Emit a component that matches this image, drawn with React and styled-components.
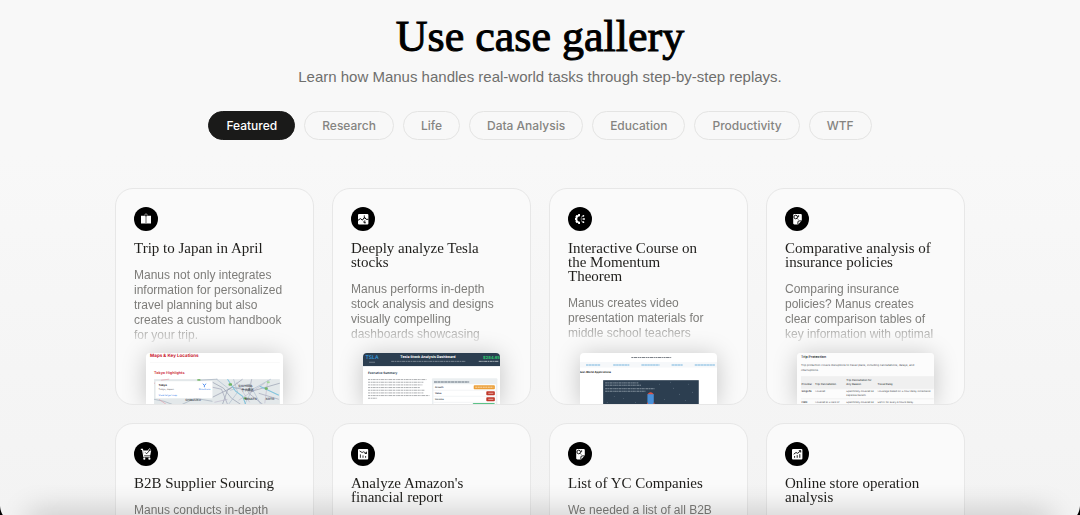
import React, { useState } from "react";
import styled, { createGlobalStyle, css } from "styled-components";

const GlobalStyle = createGlobalStyle`
  * {
    box-sizing: border-box;
  }
  body {
    margin: 0;
    background: #f8f8f8;
    font-family: "Liberation Sans", Arial, sans-serif;
    -webkit-font-smoothing: antialiased;
  }
`;

const Page = styled.div`
  position: relative;
  height: 100vh;
  overflow: hidden;
  background: linear-gradient(180deg, #f8f8f8 30%, #f3f3f3 100%);
`;

const Container = styled.main`
  display: flex;
  flex-direction: column;
  align-items: center;
  max-width: 886px;
  margin: 0 auto;
  padding: 12px 18px 48px;
`;

const Title = styled.h1`
  margin: 0;
  font-family: "Liberation Serif", serif;
  font-size: 44px;
  line-height: 50px;
  font-weight: 400;
  color: #000;
  -webkit-text-stroke: 1px #000;
`;

const Subtitle = styled.p`
  margin: 4px 0 0;
  font-size: 15px;
  line-height: 22px;
  color: #6f6f6d;
`;

const Tabs = styled.div`
  display: flex;
  justify-content: center;
  gap: 9px;
  margin: 23px 0 48px;
`;

const Tab = styled.button`
  height: 29px;
  padding: 0 17px;
  border: 1px solid #e4e4e3;
  border-radius: 15px;
  background: transparent;
  color: #858481;
  font-family: Inter, "Liberation Sans", sans-serif;
  font-size: 12px;
  font-weight: 500;
  white-space: nowrap;
  cursor: pointer;

  ${({ $active }) =>
    $active &&
    css`
      background: #1a1a19;
      border-color: #1a1a19;
      color: #fff;
    `}
`;

const Grid = styled.div`
  display: grid;
  grid-template-columns: repeat(4, 1fr);
  grid-auto-rows: 217px;
  gap: 18px;
  width: 100%;
`;

const Card = styled.article`
  display: flex;
  flex-direction: column;
  border: 1px solid #e7e7e7;
  border-radius: 18px;
  background: #fafafa;
  overflow: hidden;
`;

const CardBody = styled.div`
  flex: 1;
  min-height: 0;
  overflow: hidden;
  padding: 18px 24px 0 18px;
  mask-image: linear-gradient(180deg, #000 132px, transparent 158px);
`;

const IconCircle = styled.div`
  width: 24px;
  height: 24px;
  border-radius: 50%;
  background: #000;

  svg {
    display: block;
  }
`;

const CardTitle = styled.h2`
  margin: 10px 0 13px;
  padding-right: 8px;
  font-family: "Liberation Serif", serif;
  font-size: 15px;
  line-height: 14px;
  font-weight: 400;
  color: #1f1e1b;
`;

const CardText = styled.p`
  margin: 0;
  font-size: 12px;
  line-height: 15px;
  color: #7d7c79;
`;

const Preview = styled.div`
  flex: none;
  width: 70%;
  height: 51px;
  margin: 0 auto;
  border-radius: 4px 4px 0 0;
  background: #fff;
  box-shadow: 0 2px 24px rgba(0, 0, 0, 0.22);
  overflow: hidden;

  svg {
    display: block;
    width: 100%;
    height: 51px;
    text-rendering: geometricPrecision;
  }
`;

const BottomShade = styled.div`
  position: absolute;
  left: 0;
  right: 0;
  bottom: 0;
  height: 30px;
  overflow: hidden;
  pointer-events: none;

  &::after {
    content: "";
    position: absolute;
    left: 32px;
    right: 32px;
    top: 100%;
    height: 20px;
    box-shadow: 0 0 30px 3px rgba(0, 0, 0, 0.2);
  }
`;

const Corner = styled.svg`
  position: absolute;
  bottom: 0;
  ${({ $side }) => ($side === "left" ? "left: 0;" : "right: 0; transform: scaleX(-1);")}
`;

const Glyph = ({ children }) => (
  <svg width="24" height="24" viewBox="0 0 24 24" fill="none" aria-hidden="true">
    {children}
  </svg>
);

const BookIcon = () => (
  <Glyph>
    <path d="M7 8.8h3.2c.8 0 1.3.2 1.5.6V17c-.3-.4-.8-.5-1.5-.5H7z" fill="#fff" />
    <path d="M17 8.8h-3.2c-.8 0-1.3.2-1.5.6V17c.3-.4.8-.5 1.5-.5H17z" fill="#fff" />
    <circle cx="12" cy="8.2" r="1.3" fill="#000" stroke="#bbb" strokeWidth=".7" />
  </Glyph>
);

const StockIcon = () => (
  <Glyph>
    <rect x="7" y="7" width="10.4" height="10.4" rx="1" fill="#fff" />
    <path d="M7 13.3l2.4-1.7 2 1.5 2.2-2.8 1.5 2h2.3" stroke="#000" strokeWidth="1" />
    <path d="M13.3 8.3v3.4M13.8 13.3v3.2M12 14.8l2.8 1" stroke="#000" strokeWidth=".8" />
  </Glyph>
);

const CourseIcon = () => (
  <Glyph>
    <path
      d="M12 7v2.300a2.700 2.700 0 0 0 0 5.400V17h-1.700l-.4-1.300-1.500.4-1-1.500.6-1-1-.6v-2l1-.6-.6-1 1-1.500 1.500.4.4-1.300z"
      fill="#fff"
    />
    <path d="M12.6 12h3M13 10.4l2-1.400M13 13.600l2 1.400" stroke="#fff" strokeWidth=".6" />
    <circle cx="15.4" cy="8.8" r=".9" fill="#fff" />
    <circle cx="16" cy="12" r=".9" fill="#fff" />
    <circle cx="15.4" cy="15.2" r=".9" fill="#fff" />
  </Glyph>
);

const DocumentIcon = () => (
  <Glyph>
    <path d="M9.4 7h6.2c.7 0 1.2.5 1.2 1.2v5.2l-3.7 4H9.4c-.7 0-1.2-.5-1.2-1.2v-8c0-.7.5-1.2 1.2-1.2z" fill="#fff" />
    <circle cx="10.7" cy="10" r="1.8" fill="#fff" stroke="#000" strokeWidth=".9" />
    <path d="M12 11.3l1.2 1.2M13.6 8.2v2" stroke="#000" strokeWidth=".8" />
    <path d="M12.9 17.4v-2.3c0-.8.4-1.2 1.2-1.2h2.7" stroke="#000" strokeWidth=".9" />
  </Glyph>
);

const CartIcon = () => (
  <Glyph>
    <path d="M6.8 7.4h1.7l1.3 7.4h6.3" stroke="#fff" strokeWidth="1.1" />
    <path d="M9 8.6h8.2l-1 5H9.9z" fill="#fff" />
    <path d="M11.2 10.4l1.4 1.4 3.4-3.8" stroke="#000" strokeWidth=".8" />
    <path d="M14 8.6l1.4-1.9 1.1.7" stroke="#fff" strokeWidth=".8" />
    <circle cx="10.3" cy="16.7" r="1.1" fill="#fff" />
    <circle cx="15.4" cy="16.7" r="1.1" fill="#fff" />
  </Glyph>
);

const ReportIcon = () => (
  <Glyph>
    <rect x="7" y="7" width="10.2" height="10.4" rx="1" fill="#fff" />
    <path d="M8.6 9l2.5 1.5 1.6-.7 2.8 1.7M15.5 9.7v1.8h-1.8" stroke="#000" strokeWidth=".8" />
    <path d="M9.4 12.4v3.4M12 13.4v2.4M14.6 14v1.8" stroke="#000" strokeWidth=".8" />
  </Glyph>
);

const StoreIcon = () => (
  <Glyph>
    <rect x="7" y="7" width="10.4" height="10.4" rx="1" fill="#fff" />
    <path d="M8.7 12.2l2.3-1.7 1.7.8 2.9-2.5M13.8 8.7h1.9v1.8" stroke="#000" strokeWidth=".9" />
    <path d="M9.6 14v1.8M12.2 13.2v2.6M14.8 12.2v3.6" stroke="#000" strokeWidth=".9" />
  </Glyph>
);

const Thumb = ({ children, label }) => (
  <svg
    viewBox="0 0 137 51"
    preserveAspectRatio="xMidYMin slice"
    fontFamily="Inter, 'Liberation Sans', sans-serif"
    role="img"
    aria-label={label}
  >
    {children}
  </svg>
);

const MapThumb = () => (
  <Thumb label="Maps & Key Locations">
    <text x="4" y="4.2" fontSize="4.5" fontWeight="700" fill="#c8202f">Maps &amp; Key Locations</text>
    <path d="M4 9.5h129" stroke="#f3f3f3" strokeWidth=".5" />
    <text x="8" y="21" fontSize="3.7" fontWeight="700" fill="#d03a48">Tokyo Highlights</text>
    <rect x="8" y="26" width="125" height="25" fill="#e3e8ea" />
    <g fill="none" strokeWidth=".6">
      <path d="M66 29l11 6 8 10 9 6M76 51l5-14 15-11M66 44l20-10 19 4 28-8" stroke="#8d94a8" />
      <path d="M70 26l14 11 19-6 11 20M87 26l4 13-9 12M98 51l8-15 18-10" stroke="#a6b7c9" />
      <path d="M66 34l9 2 6 15M105 26l-3 14 14 11M112 40l20 6" stroke="#9a9db2" />
      <path d="M81 26l8 12 7 5 3 8M113 33l19 9" stroke="#7fc3dc" strokeWidth="1" />
      <path d="M8 46l10 2 8 3M36 51l13-6 17 3M53 27l18-1" stroke="#9aa6b5" />
      <path d="M8 30h1M15 27l8-1M20 51l-7-5" stroke="#e49aa5" />
      <path d="M90 29l13 20M92 47l26-17M68 49l13-3M121 27l-3 23" stroke="#b5adc4" strokeWidth=".5" />
    </g>
    <g fill="#71b562">
      <rect x="82" y="30" width="3.5" height="2.5" rx="1" />
      <rect x="118" y="34" width="3" height="2.5" rx="1" />
      <rect x="51" y="26" width="3" height="1.5" />
      <rect x="97" y="44" width="3" height="2" rx="1" />
      <rect x="120" y="28" width="3" height="2" rx="1" fill="#a3d79a" />
    </g>
    <g fontSize="3" fontWeight="600" fill="#3d434d">
      <text x="92" y="34">CHIYODA</text>
      <text x="95" y="37.4">千代田区</text>
      <text x="39" y="48">SHINJUKU</text>
      <text x="98" y="47">MINATO</text>
      <text x="119" y="47">KOTO</text>
    </g>
    <rect x="9.5" y="28" width="56.5" height="17" fill="#fff" />
    <text x="12.5" y="32.4" fontSize="2.8" fontWeight="700" fill="#222">Tokyo</text>
    <text x="12.5" y="36.6" fontSize="2.4" fill="#555">Tokyo, Japan</text>
    <text x="12.5" y="43" fontSize="2.4" fill="#1a73e8">View larger map</text>
    <path d="M56.5 30.5l1.5 1.7 1.8-1.7M58 32.2v1.8" stroke="#3f83ec" strokeWidth=".9" fill="none" />
    <text x="52.5" y="37" fontSize="2.4" fill="#1a73e8">Directions</text>
  </Thumb>
);

const paragraph = [58, 55, 54, 52, 56, 55, 61, 9];

const StockThumb = () => (
  <Thumb label="Tesla Stock Analysis Dashboard">
    <rect width="137" height="13" fill="#2c3e50" />
    <text x="2.5" y="6" fontSize="5" fontWeight="600" fill="#3498db">TSLA</text>
    <path d="M6 9.2h6" stroke="#98a3ad" strokeWidth=".6" />
    <text x="64.5" y="5.4" fontSize="3.5" fontWeight="700" fill="#fff" textAnchor="middle">
      Tesla Stock Analysis Dashboard
    </text>
    <path d="M28 8.3h74" stroke="#98a3ad" strokeWidth=".7" strokeDasharray="3 .5 1.4 .5" />
    <text x="136" y="5.8" fontSize="4" fontWeight="700" fill="#2ecc71" textAnchor="end">$284.65</text>
    <path d="M115 8.3h20" stroke="#c2c9cf" strokeWidth=".8" strokeDasharray="3 .5 1.4 .5" />
    <text x="5" y="21" fontSize="3" fontWeight="700" fill="#2c3e50">Executive Summary</text>
    <g stroke="#9a9da1" strokeWidth=".8" strokeDasharray="2.2 .6 1.2 .4 3.2 .6">
      {paragraph.map((w, i) => (
        <path key={i} d={`M5 ${26.4 + i * 2.65}h${w}`} />
      ))}
    </g>
    <rect x="68.5" y="25" width="65" height="26" rx="1" fill="#ebeff1" />
    <path d="M70.5 28.8h35" stroke="#5d6b79" strokeWidth="1" strokeDasharray="3 .4" />
    <rect x="70" y="31" width="62" height="20" fill="#fff" />
    <path d="M70 37h62M70 43h62M70 49h62" stroke="#e4e8ea" strokeWidth=".5" />
    <g fontSize="2.4" fontWeight="600" fill="#2b3540">
      <text x="71.5" y="34.8">Growth</text>
      <text x="71.5" y="40.8">Value</text>
      <text x="71.5" y="46.8">Income</text>
    </g>
    <rect x="110" y="32" width="21" height="4" rx=".8" fill="#eca03a" />
    <path d="M111.5 34h18" stroke="#fbe6c8" strokeWidth=".8" strokeDasharray="2 .5" />
    <rect x="122.5" y="38" width="8.5" height="4" rx=".8" fill="#c0392b" />
    <path d="M124.5 40h5" stroke="#efc5c0" strokeWidth=".8" />
    <rect x="122.5" y="44" width="8.5" height="4" rx=".8" fill="#c0392b" />
    <path d="M124.5 46h5" stroke="#efc5c0" strokeWidth=".8" />
    <rect x="109" y="50" width="22" height="2" rx=".8" fill="#27ae60" />
  </Thumb>
);

const stars = [
  [79, 31], [93, 35], [99, 41], [108, 31], [112, 39], [84, 46],
  [43, 45], [34, 43], [55, 49], [105, 47], [27, 49], [90, 29],
];

const CourseThumb = () => (
  <Thumb label="Real-World Applications">
    <path d="M51 4.5h40" stroke="#5b616a" strokeWidth=".8" strokeDasharray="2 .5 3.5 .6 1 .4" />
    <rect y="9" width="137" height="5.5" fill="#f6f8fa" />
    <path
      d="M6 12h14M33 12h16M61 12h18M91 12h11M114 12h20"
      stroke="#74b4de"
      strokeWidth="1"
      strokeDasharray="2.6 .3"
    />
    <text x="-1" y="20.3" fontSize="2.7" fontWeight="700" fill="#222">Real-World Applications</text>
    <rect x="23" y="27" width="95" height="24" fill="#2c3e50" />
    <path
      d="M25 29.7h33M25 32h36M25 35.5h49M25 38h40"
      stroke="#a8b4be"
      strokeWidth=".7"
      strokeDasharray="2.5 .4 1.2 .4"
    />
    <g fill="#8495a3">
      {stars.map(([x, y]) => (
        <circle key={`${x}-${y}`} cx={x} cy={y} r=".4" />
      ))}
    </g>
    <path d="M67 41.5c.5-1.8 1.7-2.6 3.2-2.6s2.6.8 3.1 2.6z" fill="#e05243" />
    <rect x="67" y="41" width="6.3" height="10" fill="#4a90d9" />
    <path d="M66.5 49.5h1V51h-1zM73 49.5h1V51h-1z" fill="#e05243" />
  </Thumb>
);

const InsuranceThumb = () => (
  <Thumb label="Trip Protection">
    <rect width="137" height="51" fill="#fcfcfc" />
    <text x="4" y="5.4" fontSize="3.5" fontWeight="600" fill="#33373c">Trip Protection</text>
    <g fontSize="2.8" fill="#4a4e53">
      <text x="4" y="13.2">Trip protection covers disruptions to travel plans, including cancellations, delays, and</text>
      <text x="4" y="18.3">interruptions.</text>
    </g>
    <rect x="4" y="23" width="132" height="12" fill="#f0f0f0" />
    <g fontSize="2.6" fontWeight="500" fill="#34383d">
      <text x="4.5" y="32">Provider</text>
      <text x="18" y="32">Trip Cancellation</text>
      <text x="49" y="28.2">Trip Cancellation for</text>
      <text x="49" y="32">Any Reason</text>
      <text x="80" y="32">Travel Delay</text>
    </g>
    <g fontSize="2.5" fill="#4a4e53">
      <text x="4.5" y="39" fontWeight="700">SingLife</text>
      <text x="18" y="39">Covered</text>
      <text x="49" y="39">Specifically covered as</text>
      <text x="49" y="42.6">separate benefit</text>
      <text x="80" y="39">Coverage based on 3-hour delay increments</text>
      <text x="4.5" y="49.3" fontWeight="700">FWD</text>
      <text x="18" y="49.3">Covered at 3 tiers of</text>
      <text x="49" y="49.3">Specifically covered as</text>
      <text x="80" y="49.3">S$100 for every 6 hours delay</text>
    </g>
    <path d="M4 35.5h132M4 45.5h132" stroke="#e6e6e6" strokeWidth=".5" />
  </Thumb>
);

const tabs = ["Featured", "Research", "Life", "Data Analysis", "Education", "Productivity", "WTF"];

const useCases = [
  {
    title: "Trip to Japan in April",
    text: "Manus not only integrates information for personalized travel planning but also creates a custom handbook for your trip.",
    icon: <BookIcon />,
    preview: <MapThumb />,
  },
  {
    title: "Deeply analyze Tesla stocks",
    text: "Manus performs in-depth stock analysis and designs visually compelling dashboards showcasing",
    icon: <StockIcon />,
    preview: <StockThumb />,
  },
  {
    title: "Interactive Course on the Momentum Theorem",
    text: "Manus creates video presentation materials for middle school teachers",
    icon: <CourseIcon />,
    preview: <CourseThumb />,
  },
  {
    title: "Comparative analysis of insurance policies",
    text: "Comparing insurance policies? Manus creates clear comparison tables of key information with optimal",
    icon: <DocumentIcon />,
    preview: <InsuranceThumb />,
  },
  {
    title: "B2B Supplier Sourcing",
    text: "Manus conducts in-depth",
    icon: <CartIcon />,
  },
  {
    title: "Analyze Amazon's financial report",
    icon: <ReportIcon />,
  },
  {
    title: "List of YC Companies",
    text: "We needed a list of all B2B",
    icon: <DocumentIcon />,
  },
  {
    title: "Online store operation analysis",
    icon: <StoreIcon />,
  },
];

export default function App() {
  const [activeTab, setActiveTab] = useState("Featured");

  return (
    <Page>
      <GlobalStyle />
      <Container>
        <Title>Use case gallery</Title>
        <Subtitle>Learn how Manus handles real-world tasks through step-by-step replays.</Subtitle>
        <Tabs>
          {tabs.map((tab) => (
            <Tab
              key={tab}
              type="button"
              $active={tab === activeTab}
              aria-pressed={tab === activeTab}
              onClick={() => setActiveTab(tab)}
            >
              {tab}
            </Tab>
          ))}
        </Tabs>
        <Grid>
          {useCases.map(({ title, text, icon, preview }) => (
            <Card key={title}>
              <CardBody>
                <IconCircle>{icon}</IconCircle>
                <CardTitle>{title}</CardTitle>
                {text && <CardText>{text}</CardText>}
              </CardBody>
              {preview && <Preview>{preview}</Preview>}
            </Card>
          ))}
        </Grid>
      </Container>
      <BottomShade />
      <Corner $side="left" width="5" height="10" viewBox="0 0 5 10" aria-hidden="true">
        <path d="M0 1c.3 3.5 1.2 6.5 2.8 9H0z" fill="#000" />
      </Corner>
      <Corner $side="right" width="5" height="10" viewBox="0 0 5 10" aria-hidden="true">
        <path d="M0 1c.3 3.5 1.2 6.5 2.8 9H0z" fill="#000" />
      </Corner>
    </Page>
  );
}
